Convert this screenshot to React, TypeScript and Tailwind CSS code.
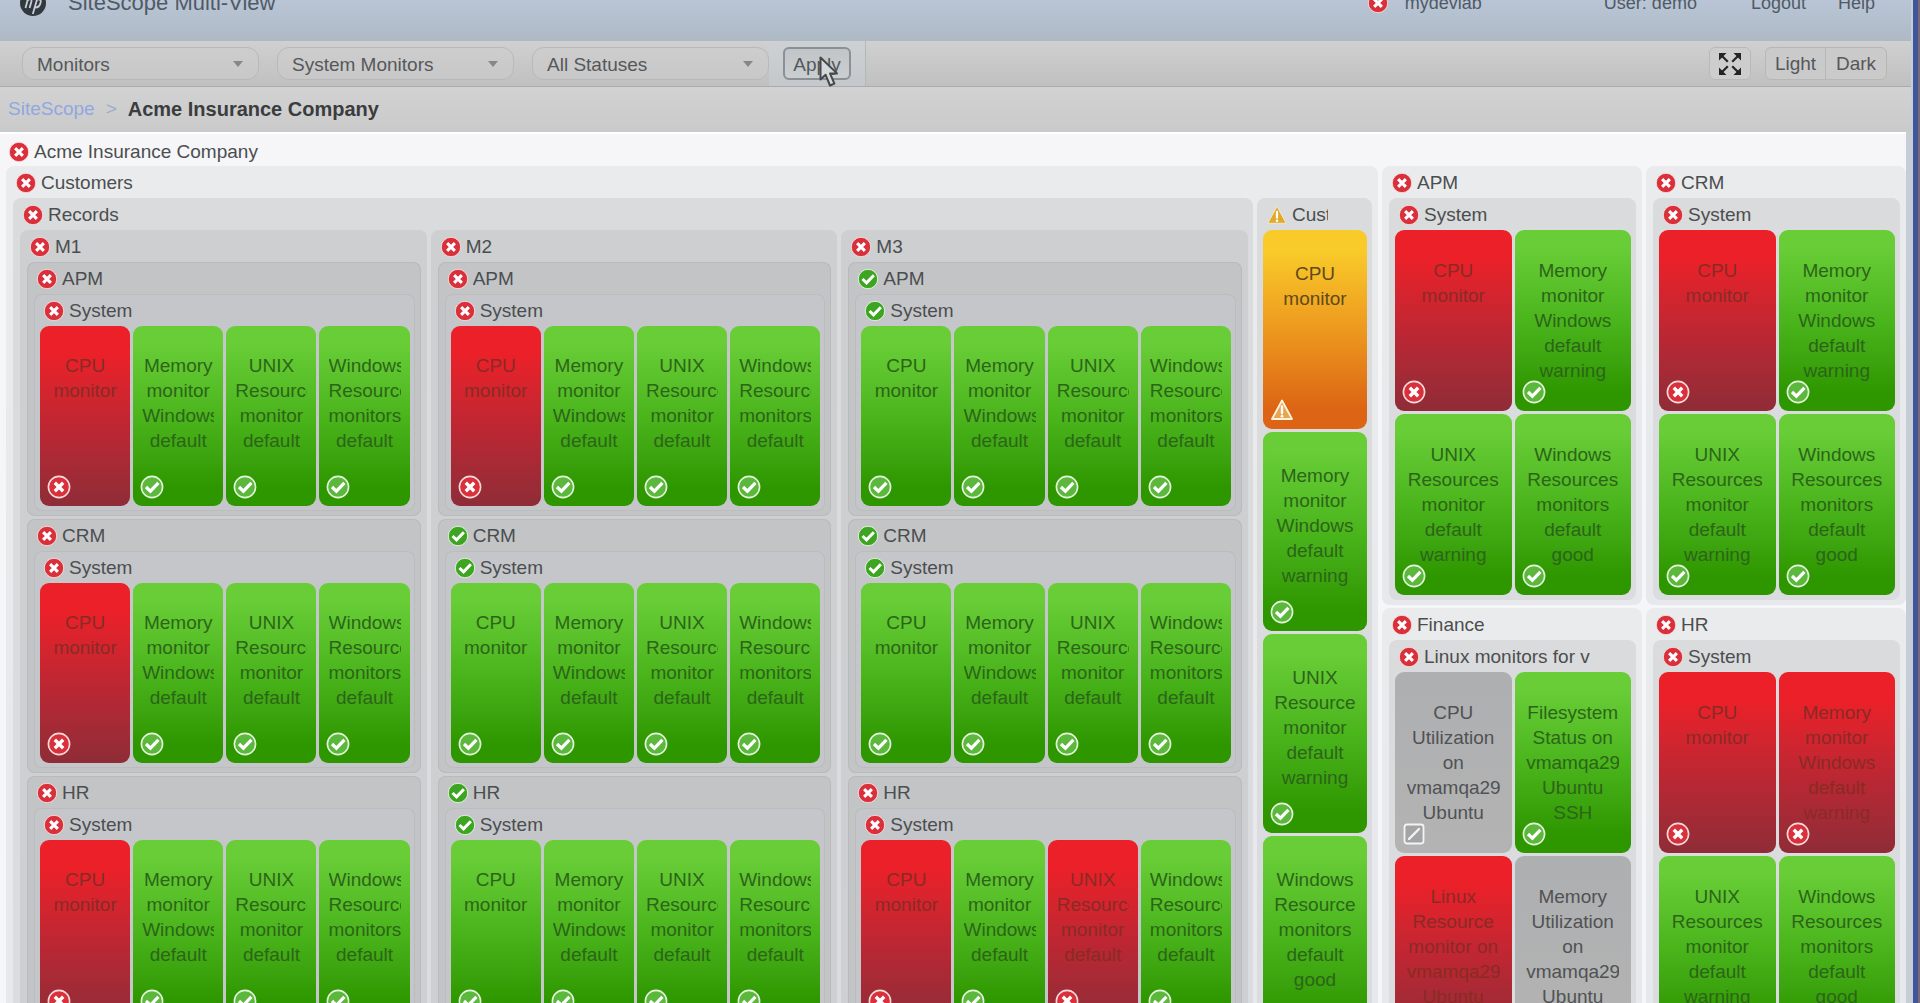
import React, { useState } from 'react'
import clsx from 'clsx'

type Status = 'error' | 'good' | 'warning' | 'disabled'

type Monitor = { label: string; status: Status }

type TileSize = 'small' | 'medium' | 'tall'

const gradients = {
  error: 'bg-linear-to-b from-[#ec2028] from-15% via-[#b92733] via-60% to-[#8f2c37] text-[#8a2a25]',
  good: 'bg-linear-to-b from-[#68cd36] from-10% via-[#4bb51c] via-50% to-[#2e9700] to-90% text-[#2c6519]',
  warning: 'bg-linear-to-b from-[#f9cb2a] from-10% to-[#dc6414] to-90% text-[#5f4a1c]',
  disabled: 'bg-linear-to-b from-[#aeafb1] to-[#b3b3b3] text-[#505254]'
}

const tileSizes = {
  small: 'h-[180px] pt-[27px]',
  medium: 'h-[181px] pt-7',
  tall: 'h-[199px] pt-[31px]'
}

// background of a panel by nesting level
const levels = [
  'bg-[#f5f5f7]',
  'bg-linear-to-b from-[#eaebec] from-5% to-[#e7e8ec]',
  'bg-linear-to-b from-[#dadbdc] from-5% to-[#dbdce0]',
  'bg-[#cdcfd1]',
  'bg-[#c3c4c6] shadow-[inset_0_0_0_1px_#b9babc]',
  'bg-[#c5c6c9] shadow-[inset_0_0_0_1px_#bbbcbe]'
]

const StatusIcon = ({ status, ring }: { status: Status; ring?: boolean }) => {
  const size = ring ? 'h-6 w-6' : 'h-[22px] w-[22px]'
  if (status === 'warning') {
    return (
      <svg viewBox="0 0 24 24" className={clsx('shrink-0', size)}>
        <path
          d="M12 2.5 L22 21 H2 Z"
          fill={ring ? '#e6a550' : '#e3a92b'}
          stroke={ring ? '#fff3dc' : '#f3ead0'}
          strokeWidth={ring ? 1.8 : 1}
          strokeLinejoin="round"
        />
        <path d="M12 8.5 V15" stroke="#fff" strokeWidth="2.4" strokeLinecap="round" />
        <circle cx="12" cy="18.2" r="1.4" fill="#fff" />
      </svg>
    )
  }
  if (status === 'disabled') {
    return (
      <svg viewBox="0 0 24 24" className={clsx('shrink-0', size)}>
        <rect x="2.5" y="2.5" width="19" height="19" rx="2.5" fill="#a3a4a5" stroke="#f4f4f4" strokeWidth="1.8" />
        <path d="M7 17 L17 7" stroke="#f4f4f4" strokeWidth="2.4" strokeLinecap="round" />
      </svg>
    )
  }
  const isError = status === 'error'
  return (
    <svg viewBox="0 0 24 24" className={clsx('shrink-0', size)}>
      <circle
        cx="12"
        cy="12"
        r="10.6"
        fill={isError ? '#d9303b' : ring ? '#5cb83c' : '#3da522'}
        stroke={isError ? '#f7dcdc' : '#e4f5dc'}
        strokeWidth={ring ? 1.6 : 1}
      />
      {isError ? (
        <path d="M7.8 7.8 L16.2 16.2 M16.2 7.8 L7.8 16.2" stroke="#fff" strokeWidth="3.4" />
      ) : (
        <path d="M6 12 L10.4 16.2 L18.4 7.8" fill="none" stroke="#fff" strokeWidth="3.2" />
      )}
    </svg>
  )
}

const Tile = ({ label, status, size }: Monitor & { size: TileSize }) => {
  return (
    <div className={clsx('relative min-w-0 overflow-hidden rounded-[9px]', tileSizes[size], gradients[status])}>
      <p className="mx-auto w-4/5 overflow-hidden text-center leading-[25px]">{label}</p>
      <span className="absolute bottom-[7px] left-[7px]">
        <StatusIcon status={status} ring />
      </span>
    </div>
  )
}

interface PanelProps {
  title: string
  status: Status
  level: number
  clipTitle?: boolean
  children: React.ReactNode
}

const Panel = ({ title, status, level, clipTitle, children }: PanelProps) => {
  return (
    <section className={clsx('min-w-0 rounded-lg pb-[5px]', levels[level])}>
      <h2 className="flex h-8 items-center gap-1 pt-0.5 pl-[9px] whitespace-nowrap text-[#4b4e50]">
        <StatusIcon status={status} />
        <span className={clsx('overflow-hidden', clipTitle && 'max-w-9')}>{title}</span>
      </h2>
      {children}
    </section>
  )
}

const Leaf = ({
  monitors,
  columns,
  size,
  ...panel
}: Omit<PanelProps, 'children'> & {
  monitors: Monitor[]
  columns: 1 | 2 | 4
  size: TileSize
}) => {
  return (
    <Panel {...panel}>
      <div
        className={clsx(
          'grid gap-[3px] pr-[5px] pl-1.5',
          columns === 1 && 'grid-cols-1',
          columns === 2 && 'grid-cols-2',
          columns === 4 && 'grid-cols-4'
        )}
      >
        {monitors.map((monitor) => (
          <Tile key={monitor.label} {...monitor} size={size} />
        ))}
      </div>
    </Panel>
  )
}

const smallLabels = [
  'CPU monitor',
  'Memory monitor Windows default',
  'UNIX Resources monitor default',
  'Windows Resources monitors default'
]

const largeLabels = [
  'CPU monitor',
  'Memory monitor Windows default warning',
  'UNIX Resources monitor default warning',
  'Windows Resources monitors default good'
]

const custLabels = [
  'CPU monitor',
  'Memory monitor Windows default warning',
  'UNIX Resource monitor default warning',
  'Windows Resource monitors default good'
]

// failed holds the indexes of the monitors in error
const withStatus = (labels: string[], failed: number[]): Monitor[] =>
  labels.map((label, i) => ({
    label,
    status: failed.includes(i) ? 'error' : 'good'
  }))

const machines = [
  {
    name: 'M1',
    groups: [
      { name: 'APM', failed: [0] },
      { name: 'CRM', failed: [0] },
      { name: 'HR', failed: [0] }
    ]
  },
  {
    name: 'M2',
    groups: [
      { name: 'APM', failed: [0] },
      { name: 'CRM', failed: [] },
      { name: 'HR', failed: [] }
    ]
  },
  {
    name: 'M3',
    groups: [
      { name: 'APM', failed: [] },
      { name: 'CRM', failed: [] },
      { name: 'HR', failed: [0, 2] }
    ]
  }
]

const custMonitors: Monitor[] = custLabels.map((label, i) => ({
  label,
  status: i === 0 ? 'warning' : 'good'
}))

const linuxMonitors: Monitor[] = [
  { label: 'CPU Utilization on vmamqa29 Ubuntu', status: 'disabled' },
  { label: 'Filesystem Status on vmamqa29 Ubuntu SSH', status: 'good' },
  { label: 'Linux Resource monitor on vmamqa29 Ubuntu', status: 'error' },
  { label: 'Memory Utilization on vmamqa29 Ubuntu', status: 'disabled' }
]

const sideColumns = [
  [
    { name: 'APM', child: 'System', monitors: withStatus(largeLabels, [0]) },
    { name: 'Finance', child: 'Linux monitors for v', monitors: linuxMonitors }
  ],
  [
    { name: 'CRM', child: 'System', monitors: withStatus(largeLabels, [0]) },
    { name: 'HR', child: 'System', monitors: withStatus(largeLabels, [0, 1]) }
  ]
]

const filters = [
  { label: 'View', options: ['Monitors', 'Groups'] },
  { label: 'Monitor type', options: ['System Monitors', 'All Monitors'] },
  { label: 'Status', options: ['All Statuses', 'Error', 'Warning', 'Good'] }
]

const Filter = ({ label, options }: { label: string; options: string[] }) => {
  const [value, setValue] = useState(options[0])
  return (
    <div className="relative w-[237px]">
      <select
        aria-label={label}
        value={value}
        onChange={(e) => setValue(e.target.value)}
        className="h-[33px] w-full appearance-none rounded-xl border border-[#b9b9b9] bg-linear-to-b from-[#cdcdcd] to-[#c8c8c8] pt-0.5 pr-8 pl-3.5 text-[#55585a]"
      >
        {options.map((option) => (
          <option key={option}>{option}</option>
        ))}
      </select>
      <svg viewBox="0 0 10 6" className="pointer-events-none absolute top-3.5 right-4 h-1.5 w-2.5">
        <path d="M0 0 H10 L5 6 Z" fill="#85888a" />
      </svg>
    </div>
  )
}

const Header = () => {
  return (
    <header className="h-[41px] overflow-hidden bg-linear-to-b from-[#b9c5d6] to-[#adbac4]">
      <div className="-mt-[11px] flex h-7 items-center pr-9 pl-5 text-lg text-[#505a64]">
        <svg viewBox="0 0 26 26" className="h-[26px] w-[26px] shrink-0">
          <circle cx="13" cy="13" r="13" fill="#33383d" />
          <path
            d="M9.5 3 L5.5 18 M7.8 10.5 C9.5 8.5 12 8.8 11.4 11.5 L9.6 18 M17 9.5 L12.8 24 M16.6 10 C19.5 8.5 21.3 9.8 20.6 12.5 C19.8 16.5 18 17.8 14.6 17.6"
            fill="none"
            stroke="#c6cfda"
            strokeWidth="1.8"
          />
        </svg>
        <h1 className="ml-[22px] text-[22px] leading-7">SiteScope Multi-View</h1>
        <div className="ml-auto flex items-center">
          <StatusIcon status="error" />
          <span className="ml-4">mydevlab</span>
          <span className="ml-[122px]">User: demo</span>
          <a href="#logout" className="ml-[54px]">
            Logout
          </a>
          <a href="#help" className="ml-8">
            Help
          </a>
        </div>
      </div>
    </header>
  )
}

const Toolbar = () => {
  return (
    <div className="flex h-[46px] items-center border-b border-[#acacac] bg-linear-to-b from-[#d0d0d0] to-[#c0c0c1] pr-6 pl-[22px]">
      <div className="flex gap-[18px]">
        {filters.map((filter) => (
          <Filter key={filter.label} {...filter} />
        ))}
      </div>
      <div className="flex h-full items-center border-r border-[#b3b8bb] bg-linear-to-b from-[#ced1d4] to-[#c3c8cc] px-3.5">
        <div className="relative">
          <button
            type="button"
            className="h-[33px] w-[68px] rounded-md border-2 border-[#8a9095] bg-linear-to-b from-[#c0c5c8] to-[#cbced0] pt-0.5 text-[#55585a]"
          >
            Apply
          </button>
          <svg viewBox="0 0 20 32" className="pointer-events-none absolute top-[9px] left-9 h-8 w-5">
            <path
              d="M1.5 1.5 V23.5 L6.6 18.8 L11 29.5 L15.4 27.6 L11 17.4 H18 Z"
              fill="#d5d8da"
              stroke="#45494c"
              strokeWidth="2"
              strokeLinejoin="round"
            />
          </svg>
        </div>
      </div>
      <button
        type="button"
        aria-label="Full screen"
        className="ml-auto flex h-[33px] w-[42px] items-center justify-center rounded-md border border-[#b9b9b9] bg-[#cdcdcd]"
      >
        <svg viewBox="0 0 24 24" className="h-6 w-6" fill="#242424" stroke="#242424">
          <path d="M1 1 H8.5 L1 8.5 Z M23 1 V8.5 L15.5 1 Z M1 23 V15.5 L8.5 23 Z M23 23 H15.5 L23 15.5 Z" stroke="none" />
          <path d="M4 4 L9.8 9.8 M20 4 L14.2 9.8 M4 20 L9.8 14.2 M20 20 L14.2 14.2" strokeWidth="2.2" />
        </svg>
      </button>
      <div className="ml-3.5 flex h-[33px] rounded-md border border-[#b7b7b7] bg-[#cacaca] text-[#55585a]">
        <button type="button" className="w-[60px] border-r border-[#b7b7b7]">
          Light
        </button>
        <button type="button" className="w-[60px]">
          Dark
        </button>
      </div>
    </div>
  )
}

const App = () => {
  return (
    <div className="h-screen overflow-hidden border-r-2 border-[#7c6a78] font-['Liberation_Sans',Arial,sans-serif] text-[19px] leading-6">
      <div className="h-full overflow-hidden border-r-[5px] border-[#3f569b] bg-[#c6cdd6] pr-[2px]">
        <Header />
        <Toolbar />
        <nav
          aria-label="Breadcrumb"
          className="flex h-[45px] items-center bg-linear-to-b from-[#d2d2d3] to-[#cacacb] pb-0.5 pl-2"
        >
          <a href="#sitescope" className="text-[#8fa8e0]">
            SiteScope
          </a>
          <span className="mx-[11px] text-[#9aaad2]">&gt;</span>
          <span className="text-xl font-bold text-[#3a3c3e]">Acme Insurance Company</span>
        </nav>

        <main className="mr-[5px] border-t-2 border-white bg-[#f6f6f8] pb-[5px]">
          <h2 className="flex h-8 items-center gap-1 pt-1 pl-2 text-[#4b4e50]">
            <StatusIcon status="error" />
            Acme Insurance Company
          </h2>
          <div className="grid grid-cols-[1372fr_260fr_260fr] gap-1 pl-1.5">
            <Panel title="Customers" status="error" level={1}>
              <div className="grid grid-cols-[1240fr_115fr] gap-1 pr-1.5 pl-[7px]">
                <Panel title="Records" status="error" level={2}>
                  <div className="grid grid-cols-3 gap-1 pr-[5px] pl-[7px]">
                    {machines.map((machine) => (
                      <Panel key={machine.name} title={machine.name} status="error" level={3}>
                        <div className="flex flex-col gap-[3px] pr-1.5 pl-[7px]">
                          {machine.groups.map((group) => {
                            const status = group.failed.length ? 'error' : 'good'
                            return (
                              <Panel key={group.name} title={group.name} status={status} level={4}>
                                <div className="pr-1.5 pl-[7px]">
                                  <Leaf
                                    title="System"
                                    status={status}
                                    level={5}
                                    columns={4}
                                    size="small"
                                    monitors={withStatus(smallLabels, group.failed)}
                                  />
                                </div>
                              </Panel>
                            )
                          })}
                        </div>
                      </Panel>
                    ))}
                  </div>
                </Panel>
                <Leaf
                  title="Cust"
                  status="warning"
                  level={2}
                  clipTitle
                  columns={1}
                  size="tall"
                  monitors={custMonitors}
                />
              </div>
            </Panel>

            {sideColumns.map((groups, i) => (
              <div key={i} className="flex min-w-0 flex-col gap-[3px]">
                {groups.map((group) => (
                  <Panel key={group.name} title={group.name} status="error" level={1}>
                    <div className="pr-1.5 pl-[7px]">
                      <Leaf
                        title={group.child}
                        status="error"
                        level={2}
                        columns={2}
                        size="medium"
                        monitors={group.monitors}
                      />
                    </div>
                  </Panel>
                ))}
              </div>
            ))}
          </div>
        </main>
      </div>
    </div>
  )
}

export default App
